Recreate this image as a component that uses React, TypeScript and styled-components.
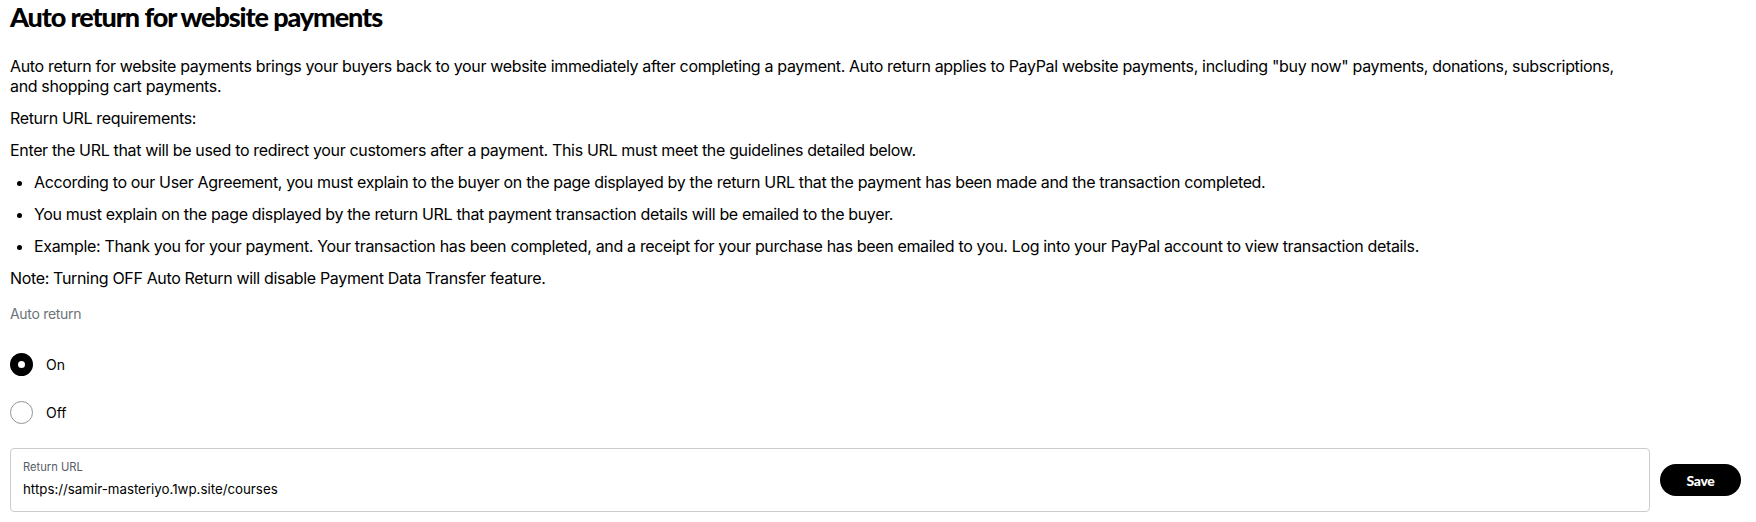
import styled, { createGlobalStyle } from "styled-components";
import { useState } from "react";

const GlobalStyle = createGlobalStyle`
  html, body {
    margin: 0;
    padding: 0;
    background: #fff;
  }
  body {
    font-family: Inter, "Liberation Sans", Arial, sans-serif;
    color: #000;
  }
`;

const App = () => {
  const [autoReturn, setAutoReturn] = useState<"on" | "off">("on");
  const [url, setUrl] = useState("https://samir-masteriyo.1wp.site/courses");

  return (
    <>
      <GlobalStyle />
      <Page>
        <Title>Auto return for website payments</Title>
        <Text>
          Auto return for website payments brings your buyers back to your
          website immediately after completing a payment. Auto return applies
          to PayPal website payments, including "buy now" payments, donations,
          subscriptions, and shopping cart payments.
        </Text>
        <Text>Return URL requirements:</Text>
        <Text>
          Enter the URL that will be used to redirect your customers after a
          payment. This URL must meet the guidelines detailed below.
        </Text>
        <Bullets>
          <li>
            According to our User Agreement, you must explain to the buyer on
            the page displayed by the return URL that the payment has been made
            and the transaction completed.
          </li>
          <li>
            You must explain on the page displayed by the return URL that
            payment transaction details will be emailed to the buyer.
          </li>
          <li>
            Example: Thank you for your payment. Your transaction has been
            completed, and a receipt for your purchase has been emailed to you.
            Log into your PayPal account to view transaction details.
          </li>
        </Bullets>
        <Text>
          Note: Turning OFF Auto Return will disable Payment Data Transfer
          feature.
        </Text>

        {/* auto return radio group */}
        <Fieldset>
          <Legend>Auto return</Legend>
          <RadioRow onClick={() => setAutoReturn("on")}>
            <Radio $checked={autoReturn === "on"} />
            <RadioLabel>On</RadioLabel>
          </RadioRow>
          <RadioRow onClick={() => setAutoReturn("off")}>
            <Radio $checked={autoReturn === "off"} />
            <RadioLabel>Off</RadioLabel>
          </RadioRow>
        </Fieldset>

        {/* return url + save */}
        <UrlRow>
          <Field>
            <FieldLabel>Return URL</FieldLabel>
            <FieldInput value={url} onChange={(e) => setUrl(e.target.value)} />
          </Field>
          <SaveButton type="button">Save</SaveButton>
        </UrlRow>
      </Page>
    </>
  );
};

export default App;

const Page = styled.div`
  padding: 0 15px 0 10px;
  display: flex;
  flex-direction: column;
`;

const Title = styled.h1`
  margin: 0 0 22px;
  font-family: Lato, "Liberation Sans", sans-serif;
  font-weight: 900;
  font-size: 27px;
  line-height: 34px;
  letter-spacing: -1.1px;
  color: #000;
`;

const Text = styled.p`
  margin: 0 0 12px;
  max-width: 1625px;
  font-size: 16px;
  line-height: 20px;
  letter-spacing: -0.34px;
`;

const Bullets = styled.ul`
  margin: 0 0 12px;
  padding: 0 0 0 24px;
  li {
    font-size: 16px;
    line-height: 20px;
    letter-spacing: -0.34px;
    margin-bottom: 12px;
  }
  li:last-child {
    margin-bottom: 0;
  }
`;

const Fieldset = styled.div`
  display: flex;
  flex-direction: column;
  margin-top: 4px;
`;

const Legend = styled.div`
  font-size: 14px;
  line-height: 20px;
  letter-spacing: -0.3px;
  color: #6c7378;
  margin-bottom: 28px;
`;

const RadioRow = styled.label`
  display: flex;
  align-items: center;
  gap: 13px;
  height: 24px;
  margin-bottom: 24px;
  cursor: pointer;
`;

const Radio = styled.span<{ $checked: boolean }>`
  box-sizing: border-box;
  width: 23px;
  height: 23px;
  border-radius: 50%;
  background: #fff;
  border: ${(p) => (p.$checked ? "8px solid #000" : "1px solid #929496")};
`;

const RadioLabel = styled.span`
  font-size: 14px;
  color: #000;
`;

const UrlRow = styled.div`
  display: flex;
  align-items: center;
  gap: 10px;
`;

const Field = styled.div`
  flex: 1;
  box-sizing: border-box;
  height: 64px;
  padding: 10px 12px 0;
  border: 1px solid #cbcbcb;
  border-radius: 4px;
  display: flex;
  flex-direction: column;
`;

const FieldLabel = styled.span`
  font-size: 11.2px;
  line-height: 16px;
  color: #545d68;
`;

const FieldInput = styled.input`
  border: none;
  outline: none;
  padding: 0;
  margin-top: 6px;
  font-family: Inter, "Liberation Sans", sans-serif;
  font-size: 13.3px;
  color: #000;
  background: transparent;
`;

const SaveButton = styled.button`
  width: 81px;
  height: 32px;
  border: none;
  border-radius: 16px;
  background: #000;
  color: #fff;
  font-family: Lato, "Liberation Sans", sans-serif;
  font-weight: 900;
  font-size: 14px;
  letter-spacing: -0.3px;
  cursor: pointer;
`;
